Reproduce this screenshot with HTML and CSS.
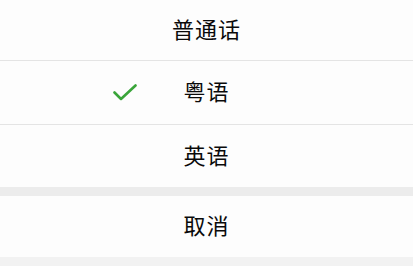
FILE: index.html
```html
<!DOCTYPE html>
<html lang="zh">
<head>
<meta charset="utf-8">
<link rel="stylesheet" href="styles.css">
</head>
<body>
<div class="sheet">
  <div class="options">
    <div class="row row-1">普通话</div>
    <div class="row row-2">
      <svg class="check" width="24" height="17" viewBox="0 0 24 17"><path d="M1.5 8.5 L8 15 L22.5 1.5" fill="none" stroke="#3aa53a" stroke-width="2.6" stroke-linecap="round" stroke-linejoin="round"/></svg>
      粤语
    </div>
    <div class="row row-3">英语</div>
  </div>
  <div class="gap"></div>
  <div class="row cancel">取消</div>
  <div class="bottom"></div>
</div>
</body>
</html>
```
FILE: styles.css
```css
html, body {
  margin: 0;
  padding: 0;
  background: #fdfdfd;
}
.sheet {
  width: 413px;
  height: 266px;
  display: flex;
  flex-direction: column;
  font-family: "Noto Sans CJK SC", "Noto Sans", sans-serif;
  color: #0a0a0a;
}
.row {
  position: relative;
  display: flex;
  align-items: center;
  justify-content: center;
  font-size: 22px;
  background: #fdfdfd;
  letter-spacing: 1px;
  box-sizing: border-box;
  padding-bottom: 5px;
}
.row-1 { height: 61px; border-bottom: 1px solid #e4e4e4; }
.row-2 { height: 64px; border-bottom: 1px solid #e4e4e4; }
.row-3 { height: 62px; }
.check {
  position: absolute;
  left: 113px;
  top: 23px;
}
.gap {
  height: 9px;
  background: #ececec;
}
.cancel { height: 61px; }
.bottom {
  flex: 1;
  background: #f2f2f2;
}
```
